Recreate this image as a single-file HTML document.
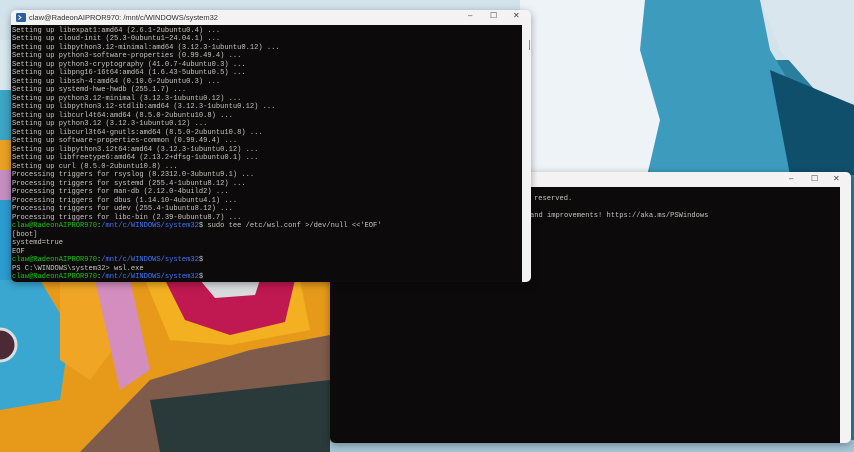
<!DOCTYPE html>
<html><head><meta charset="utf-8"><style>
*{margin:0;padding:0;box-sizing:border-box}
body{width:854px;height:452px;overflow:hidden;position:relative;background:#8fb9cf;font-family:"Liberation Mono",monospace}
.bg{position:absolute;left:0;top:0}
.win{position:absolute;background:#f3f3f3;border-radius:5px;overflow:hidden;box-shadow:0 2px 8px rgba(0,0,0,.35)}
.term{position:absolute;background:#0c0a0b}
.t{position:absolute;font-size:7.08px;line-height:8.52px;color:#c8c4c0;white-space:pre}
.g{color:#16c60c}.b{color:#3b78ff}
.title{position:absolute;font-family:"Liberation Sans",sans-serif;font-size:7.5px;color:#333}
.btn{position:absolute;font-family:"Liberation Sans",sans-serif;color:#444;font-size:8px}
</style></head><body>
<svg class="bg" width="854" height="452" viewBox="0 0 854 452">
<rect width="854" height="452" fill="#2a7f9f"/>
<rect x="0" y="0" width="854" height="60" fill="#d3e3ec"/>
<path d="M640 0 L760 0 L770 50 L800 100 L840 175 L650 175 L645 120 L640 60Z" fill="#3d9bbd"/>
<path d="M520 0 L645 0 L640 50 L660 120 L648 172 L520 175Z" fill="#eef3f7"/>
<path d="M760 0 L854 0 L854 105 L815 90 L780 50Z" fill="#dae6ed"/>
<path d="M770 70 L854 105 L854 175 L790 175Z" fill="#0f4f6c"/>
<rect x="0" y="40" width="20" height="50" fill="#d8e8ee"/>
<rect x="0" y="90" width="20" height="50" fill="#3aa5c4"/>
<rect x="0" y="140" width="20" height="30" fill="#e9a123"/>
<rect x="0" y="170" width="20" height="30" fill="#c48fc0"/>
<rect x="0" y="200" width="20" height="100" fill="#2b9ccf"/>
<rect x="0" y="280" width="340" height="172" fill="#e79a1a"/>
<path d="M0 280 L40 280 L70 330 L60 400 L0 410Z" fill="#3aa7d1"/>
<path d="M60 280 L120 280 L120 340 L90 380 L60 360Z" fill="#f0a524"/>
<path d="M95 280 L130 280 L150 370 L120 390Z" fill="#d48dbf"/>
<path d="M145 280 L300 280 L310 330 L230 345 L170 340Z" fill="#f3b021"/>
<path d="M165 280 L295 280 L285 322 L230 335 L185 320Z" fill="#c01850"/>
<path d="M200 280 L260 280 L255 295 L215 298Z" fill="#d9dcdc"/>
<path d="M330 335 L250 350 L150 380 L80 452 L330 452Z" fill="#7f5b4b"/>
<path d="M150 400 L330 380 L330 452 L160 452Z" fill="#2a3a3a"/>
<circle cx="0" cy="345" r="16" fill="#4b2a35" stroke="#d9dee0" stroke-width="3"/>
<rect x="330" y="440" width="524" height="12" fill="#a7c6d6"/>
</svg>

<div class="win" style="left:330px;top:172px;width:521px;height:271px">
  <div class="btn" style="left:459px;top:2px">–</div>
  <div class="btn" style="left:481px;top:2px">☐</div>
  <div class="btn" style="left:503px;top:2px">✕</div>
  <div class="term" style="left:0;top:15px;width:510px;height:256px"></div>
  <div class="t" style="left:204px;top:23px">reserved.</div>
  <div class="t" style="left:200px;top:40px">and improvements! https://aka.ms/PSWindows</div>
</div>

<div class="win" style="left:11px;top:10px;width:520px;height:272px">
  <svg style="position:absolute;left:5px;top:3px" width="10" height="9"><rect width="10" height="9" rx="1.5" fill="#2b5f9e"/><path d="M2.5 2.5 L5 4.5 L2.5 6.5" stroke="#fff" stroke-width="1" fill="none"/></svg>
  <div class="title" style="left:18px;top:3px">claw@RadeonAIPROR970: /mnt/c/WINDOWS/system32</div>
  <div class="btn" style="left:457px;top:1px">–</div>
  <div class="btn" style="left:479px;top:1px">☐</div>
  <div class="btn" style="left:502px;top:1px">✕</div>
  <div style="position:absolute;right:1px;top:30px;width:1.5px;height:10px;background:#888"></div>
  <div class="term" style="left:0;top:15px;width:511px;height:257px"></div>
  <div class="t" style="left:1px;top:16.5px">Setting up libexpat1:amd64 (2.6.1-2ubuntu0.4) ...
Setting up cloud-init (25.3-0ubuntu1~24.04.1) ...
Setting up libpython3.12-minimal:amd64 (3.12.3-1ubuntu0.12) ...
Setting up python3-software-properties (0.99.49.4) ...
Setting up python3-cryptography (41.0.7-4ubuntu0.3) ...
Setting up libpng16-16t64:amd64 (1.6.43-5ubuntu0.5) ...
Setting up libssh-4:amd64 (0.10.6-2ubuntu0.3) ...
Setting up systemd-hwe-hwdb (255.1.7) ...
Setting up python3.12-minimal (3.12.3-1ubuntu0.12) ...
Setting up libpython3.12-stdlib:amd64 (3.12.3-1ubuntu0.12) ...
Setting up libcurl4t64:amd64 (8.5.0-2ubuntu10.8) ...
Setting up python3.12 (3.12.3-1ubuntu0.12) ...
Setting up libcurl3t64-gnutls:amd64 (8.5.0-2ubuntu10.8) ...
Setting up software-properties-common (0.99.49.4) ...
Setting up libpython3.12t64:amd64 (3.12.3-1ubuntu0.12) ...
Setting up libfreetype6:amd64 (2.13.2+dfsg-1ubuntu0.1) ...
Setting up curl (8.5.0-2ubuntu10.8) ...
Processing triggers for rsyslog (8.2312.0-3ubuntu9.1) ...
Processing triggers for systemd (255.4-1ubuntu8.12) ...
Processing triggers for man-db (2.12.0-4build2) ...
Processing triggers for dbus (1.14.10-4ubuntu4.1) ...
Processing triggers for udev (255.4-1ubuntu8.12) ...
Processing triggers for libc-bin (2.39-0ubuntu8.7) ...
<span class="g">claw@RadeonAIPROR970</span>:<span class="b">/mnt/c/WINDOWS/system32</span>$ sudo tee /etc/wsl.conf &gt;/dev/null &lt;&lt;'EOF'
[boot]
systemd=true
EOF
<span class="g">claw@RadeonAIPROR970</span>:<span class="b">/mnt/c/WINDOWS/system32</span>$
PS C:\WINDOWS\system32&gt; wsl.exe
<span class="g">claw@RadeonAIPROR970</span>:<span class="b">/mnt/c/WINDOWS/system32</span>$</div>
</div>
</body></html>
